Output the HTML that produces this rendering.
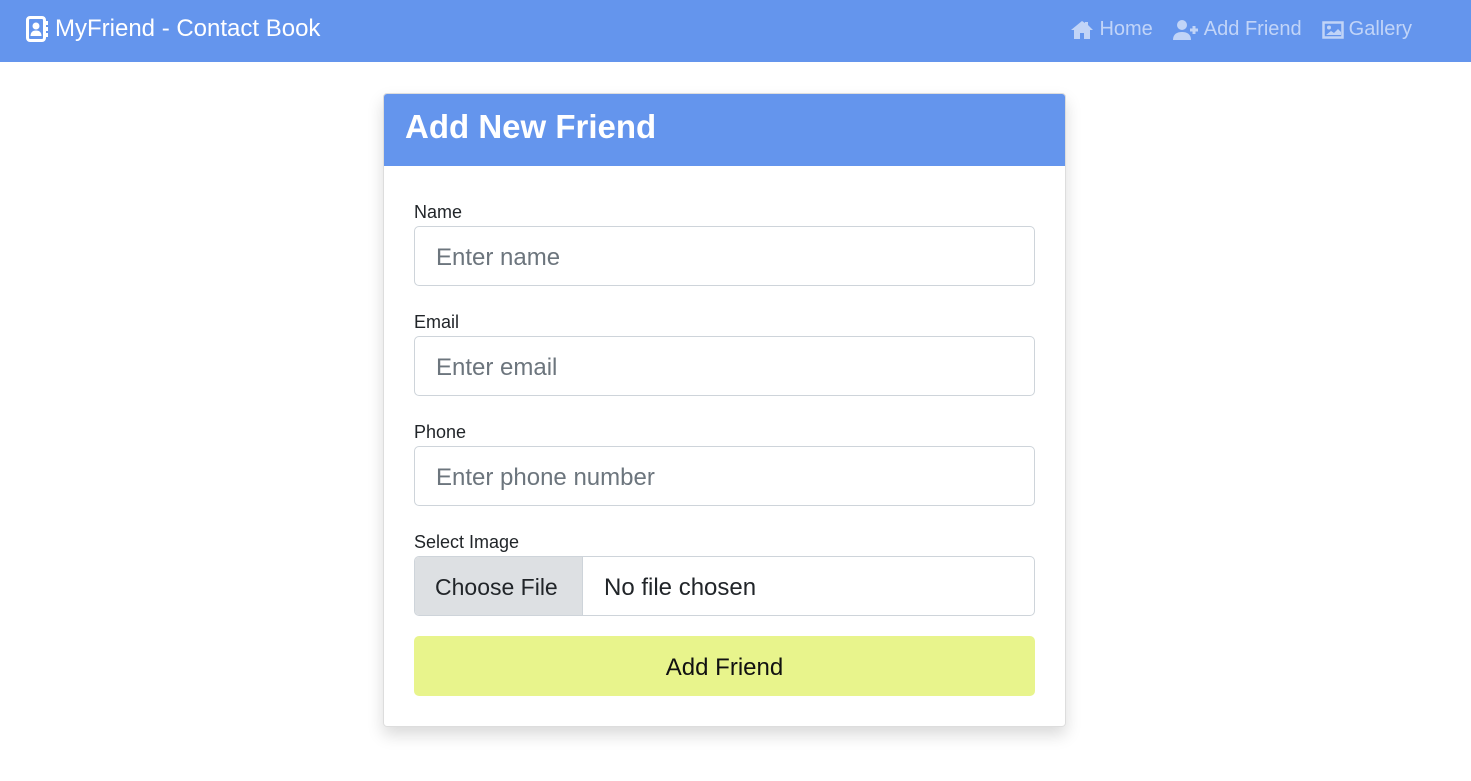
<!DOCTYPE html>
<html><head><style>
*{box-sizing:border-box;margin:0;padding:0}
body{width:1471px;height:781px;background:#fff;font-family:"Liberation Sans",sans-serif;color:#212529;overflow:hidden}
.nav{height:62px;background:#6495ed;position:relative}
.brand{position:absolute;left:26px;top:15px;color:#fff;font-size:24px;display:flex;align-items:center;gap:7px}
.links{position:absolute;right:59px;top:18px;display:flex;gap:20px;color:rgba(255,255,255,.6);font-size:20px}
.links span{display:flex;align-items:center;gap:5px}
.card{position:absolute;left:383px;top:93px;width:683px;height:634px;border:1px solid #ddd;border-radius:4px;box-shadow:0 8px 16px rgba(0,0,0,.15);overflow:hidden}
.hd{height:72px;background:#6495ed;color:#fff;font-size:33px;font-weight:bold;padding:14px 21px}
.bd{padding:36px 30px 0 30px}
label{display:block;font-size:18px;height:24px;line-height:20px}
.in{height:60px;border:1px solid #ced4da;border-radius:5px;font-size:24px;color:#6c757d;padding:17px 21px;margin-bottom:26px}
.file{height:60px;border:1px solid #ced4da;border-radius:5px;font-size:24px;display:flex;overflow:hidden;margin-bottom:20px;white-space:nowrap}
.file .b{background:#dde0e3;border-right:1px solid #ced4da;padding:17px 20px;width:168px;font-size:23px}
.file .t{padding:17px 21px}
.btn{height:60px;background:#e8f48c;border-radius:5px;font-size:24px;text-align:center;line-height:64px;color:#111}
</style></head><body>
<div class="nav">
<div class="brand"><svg width="22" height="26" viewBox="0 0 22 26"><rect x="1.5" y="1.5" width="17" height="23" rx="2.5" fill="none" stroke="#fff" stroke-width="3"/><circle cx="10" cy="10" r="3.5" fill="#fff"/><path d="M4.5 20c0-4 2.5-5.5 5.5-5.5s5.5 1.5 5.5 5.5z" fill="#fff"/><rect x="19" y="5" width="3" height="4" fill="#fff"/><rect x="19" y="11" width="3" height="4" fill="#fff"/><rect x="19" y="17" width="3" height="4" fill="#fff"/></svg>MyFriend - Contact Book</div>
<div class="links">
<span><svg width="24" height="20" viewBox="0 0 24 20"><path d="M12 1L1 10h3v9h6v-6h4v6h6v-9h3L18 5V2h-3v1z" fill="#c1d4f7"/></svg>Home</span>
<span><svg width="26" height="20" viewBox="0 0 26 20"><circle cx="9" cy="5" r="5" fill="#c1d4f7"/><path d="M0 20c0-6 4-8 9-8s9 2 9 8z" fill="#c1d4f7"/><path d="M21 6v8M17 10h8" stroke="#c1d4f7" stroke-width="3"/></svg>Add Friend</span>
<span><svg width="22" height="18" viewBox="0 0 22 18"><rect x="1.5" y="1.5" width="19" height="15" fill="none" stroke="#c1d4f7" stroke-width="2.5"/><circle cx="7" cy="6.5" r="2" fill="#c1d4f7"/><path d="M4 14l5-4 3 2 4-4 3 3v3z" fill="#c1d4f7"/></svg>Gallery</span>
</div></div>
<div class="card">
<div class="hd">Add New Friend</div>
<div class="bd">
<label>Name</label><div class="in">Enter name</div>
<label>Email</label><div class="in">Enter email</div>
<label>Phone</label><div class="in">Enter phone number</div>
<label>Select Image</label><div class="file"><div class="b">Choose File</div><div class="t">No file chosen</div></div>
<div class="btn">Add Friend</div>
</div></div>
</body></html>
